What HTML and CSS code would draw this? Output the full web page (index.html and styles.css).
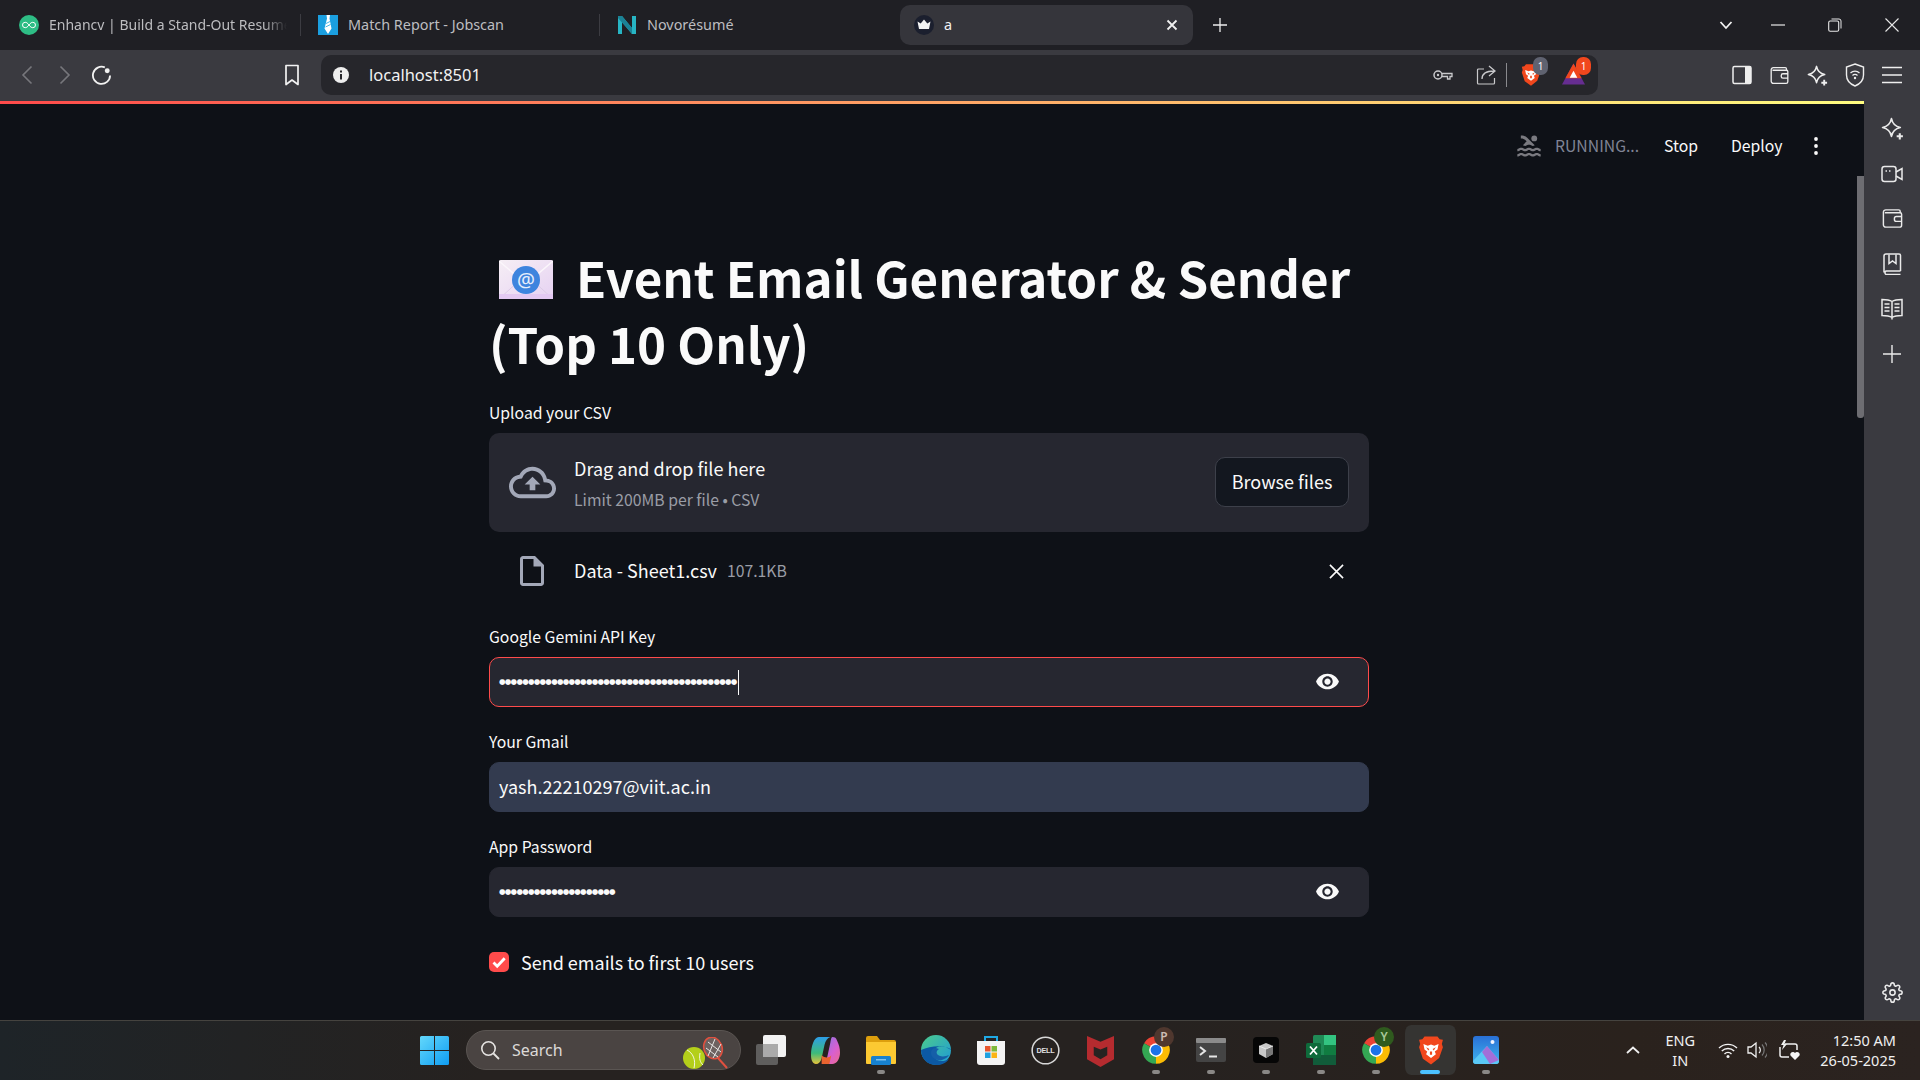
FILE: index.html
```html
<!DOCTYPE html>
<html lang="en">
<head>
<meta charset="utf-8">
<title>a</title>
<link rel="stylesheet" href="styles.css">
</head>
<body>
<svg class="defs" width="0" height="0">
  <defs>
    <symbol id="i-star" viewBox="0 0 24 24"><path d="M11 2.500c1 5 3.500 7.500 8.500 8.500-5 1-7.500 3.500-8.500 8.500C10 14.500 7.500 12 2.500 11 7.500 10 10 7.500 11 2.500z" fill="none" stroke="currentColor" stroke-width="1.600" stroke-linejoin="round"/><path d="M19 16.500v6M16 19.500h6" stroke="currentColor" stroke-width="2"/></symbol>
    <symbol id="i-wallet" viewBox="0 0 24 24"><path d="M20 6V4.500A1.500 1.500 0 0 0 18.500 3H5a2.500 2.500 0 0 0-2.500 2.500v13A2.500 2.500 0 0 0 5 21h14.500a2 2 0 0 0 2-2V7.500A1.500 1.500 0 0 0 20 6H4M21.500 10H16a2 2 0 0 0-2 2v1a2 2 0 0 0 2 2h5.500" fill="none" stroke="currentColor" stroke-width="1.500"/></symbol>
    <symbol id="i-eye" viewBox="0 0 24 24"><path fill="currentColor" d="M12 4.500C7 4.500 2.730 7.610 1 12c1.730 4.390 6 7.500 11 7.500s9.270-3.110 11-7.500c-1.730-4.390-6-7.500-11-7.500zM12 17c-2.760 0-5-2.240-5-5s2.240-5 5-5 5 2.240 5 5-2.240 5-5 5zm0-8c-1.660 0-3 1.340-3 3s1.340 3 3 3 3-1.340 3-3-1.340-3-3-3z"/></symbol>
    <symbol id="i-chrome" viewBox="0 0 24 24"><path fill="#ea4335" d="M12 12 2.470 6.500A11 11 0 0 1 21.530 6.500z"/><path fill="#fbbc04" d="M12 12 21.530 6.500A11 11 0 0 1 12 23z"/><path fill="#34a853" d="M12 12 12 23A11 11 0 0 1 2.470 6.500z"/><circle cx="12" cy="12" r="5.500" fill="#fff"/><circle cx="12" cy="12" r="4.300" fill="#1a73e8"/></symbol>
    <symbol id="i-lion" viewBox="0 0 24 28"><path fill="#f1471d" d="M6 1h12l2 2.500 3 .5-1 4 1 3-3.500 10L12 27l-7.500-5.500L1 11l1-3-1-4 3-.5z"/><path fill="#fff" d="M5 8l4 1.500 3-1 3 1L19 8l-1 5-2.500 2 1 2.500L12 21l-4.500-3.500 1-2.500L6 13z"/><path fill="#f1471d" d="M7.500 11l3 1.500-1 1.500zM16.500 11l-3 1.500 1 1.500zM11 15h2v3h-2z"/></symbol>
  </defs>
</svg>

<header class="tabstrip">
  <div class="tab">
    <svg class="favicon" viewBox="0 0 20 20"><circle cx="10" cy="10" r="10" fill="#2ebd85"/><path d="M10 10c-1.500-2-2.500-2.700-3.800-2.700a2.700 2.700 0 0 0 0 5.400c1.300 0 2.300-.7 3.800-2.700s2.500-2.700 3.800-2.700a2.700 2.700 0 0 1 0 5.400c-1.300 0-2.300-.7-3.800-2.700z" fill="none" stroke="#fff" stroke-width="1"/></svg>
    <span class="tab-title tab-fade">Enhancv | Build a Stand-Out Resume</span>
  </div>
  <div class="tab tab-sep">
    <svg class="favicon" viewBox="0 0 20 20"><rect width="20" height="20" fill="#1b9fe0"/><path d="M8.500 0h3.500l-.5 3.500 2 10L10 19l-3.500-5.500 2.500-10z" fill="#fff"/><path d="M8 8.500l4-2M7.500 12l5-2.500" stroke="#1b9fe0" stroke-width=".8"/></svg>
    <span class="tab-title">Match Report - Jobscan</span>
  </div>
  <div class="tab tab-sep tab-n">
    <svg class="favicon" viewBox="0 0 20 20"><path d="M1 19V1h4l10 12V1h4v18h-4L5 7v12z" fill="#27b5c4"/><path d="M1 1h4l10 12v6L1 3z" fill="#1b8296"/></svg>
    <span class="tab-title">Novorésumé</span>
  </div>
  <div class="tab-active">
    <svg class="favicon" viewBox="0 0 20 20"><circle cx="10" cy="10" r="10" fill="#1b1f2e"/><path d="M3.500 6.500l3.200 2L10 4.500l3.300 4 3.200-2-1.500 7.500H5z" fill="#f2f2f2"/></svg>
    <span class="tab-title tab-title-active">a</span>
    <svg class="tab-close" viewBox="0 0 12 12"><path d="M1.500 1.500l9 9M10.500 1.500l-9 9" stroke="#f0f0f0" stroke-width="1.800"/></svg>
  </div>
  <svg class="tab-new" viewBox="0 0 14 14"><path d="M7 0v14M0 7h14" stroke="#ededed" stroke-width="1.300"/></svg>
  <div class="winctl">
    <div class="winbtn winbtn-list"><svg viewBox="0 0 14 14" width="14" height="14"><path d="M1.500 4l5.500 6 5.500-6" fill="none" stroke="#f2f2f2" stroke-width="1.800"/></svg></div>
    <div class="winbtn"><svg viewBox="0 0 14 14" width="14" height="14"><path d="M0 7h14" stroke="#e8e8e8" stroke-width="1.200"/></svg></div>
    <div class="winbtn"><svg viewBox="0 0 14 14" width="14" height="14"><rect x=".7" y="3" width="10" height="10.300" rx="1.500" fill="none" stroke="#e8e8e8" stroke-width="1.100"/><path d="M3.500 1h7.500a2 2 0 0 1 2 2v7.500" fill="none" stroke="#e8e8e8" stroke-width="1"/></svg></div>
    <div class="winbtn"><svg viewBox="0 0 14 14" width="14" height="14"><path d="M.5.500l13 13M13.500.500l-13 13" stroke="#e8e8e8" stroke-width="1.100"/></svg></div>
  </div>
</header>

<nav class="toolbar">
  <div class="tb-btn"><svg viewBox="0 0 12 20" width="12" height="20"><path d="M10.500 1.500 2 10l8.500 8.500" fill="none" stroke="#77777c" stroke-width="1.600"/></svg></div>
  <div class="tb-btn"><svg viewBox="0 0 12 20" width="12" height="20"><path d="M1.500 1.500 10 10l-8.500 8.500" fill="none" stroke="#77777c" stroke-width="1.600"/></svg></div>
  <div class="tb-btn tb-reload"><svg viewBox="0 0 22 22" width="21" height="21"><path d="M14.500 2.500A9 9 0 1 0 20 11" fill="none" stroke="#f2f2f2" stroke-width="1.900"/><circle cx="17" cy="6" r="2.600" fill="#f2f2f2"/></svg></div>
  <div class="tb-bookmark"><svg viewBox="0 0 16 22" width="16" height="22"><path d="M2 1.500h12v19l-6-4.500-6 4.500z" fill="none" stroke="#f2f2f2" stroke-width="1.700" stroke-linejoin="round"/></svg></div>
  <div class="omnibox">
    <svg class="omni-info" viewBox="0 0 16 16"><circle cx="8" cy="8" r="8" fill="#eee"/><rect x="7" y="7" width="2" height="5.500" fill="#26262b"/><rect x="7" y="3.500" width="2" height="2" fill="#26262b"/></svg>
    <span class="omni-url">localhost:8501</span>
    <div class="omni-right">
      <svg class="om-key" viewBox="0 0 20 12" width="20" height="12"><circle cx="5" cy="6" r="4" fill="none" stroke="#c9c9cc" stroke-width="1.500"/><circle cx="5" cy="6" r="1.200" fill="#c9c9cc"/><path d="M9 4.500h10v3h-2v2.500h-2.500V7.500H9" fill="none" stroke="#c9c9cc" stroke-width="1.300"/></svg>
      <svg class="om-share" viewBox="0 0 20 20" width="20" height="20"><path d="M8 4H2.500a1 1 0 0 0-1 1v13a1 1 0 0 0 1 1h15a1 1 0 0 0 1-1v-5" fill="none" stroke="#c9c9cc" stroke-width="1.200"/><path d="M6 14c0-5.500 4-8 12-8M13 1l6 5-6 5" fill="none" stroke="#c9c9cc" stroke-width="1.300"/></svg>
      <span class="om-sep"></span>
      <div class="om-ext">
        <svg class="om-lion" width="20" height="24"><use href="#i-lion"/></svg>
        <span class="om-badge om-badge-grey">1</span>
      </div>
      <div class="om-ext om-ext-bat">
        <svg class="om-bat" viewBox="0 0 24 22" width="23" height="22"><path d="M12 0 24 22H0z" fill="#662d91"/><path d="M12 0 20.500 15.500h-17z" fill="#f1471d"/><path d="M12 7.500l4 7.500H8z" fill="#fff"/></svg>
        <span class="om-badge om-badge-red">1</span>
      </div>
    </div>
  </div>
  <div class="tb-right">
    <div class="tb-btn2"><svg viewBox="0 0 20 20" width="20" height="20"><rect x="1" y="1.500" width="18" height="17" rx="1.500" fill="none" stroke="#eee" stroke-width="1.500"/><rect x="13" y="1.500" width="6" height="17" fill="#eee"/></svg></div>
    <div class="tb-btn2 icon-light"><svg width="21" height="21"><use href="#i-wallet"/></svg></div>
    <div class="tb-btn2 icon-light"><svg width="23" height="23"><use href="#i-star"/></svg></div>
    <div class="tb-btn2"><svg viewBox="0 0 20 24" width="20" height="24"><path d="M10 1l8.500 3v8c0 5.500-3.500 9-8.500 11-5-2-8.500-5.500-8.500-11V4z" fill="none" stroke="#eee" stroke-width="1.400"/><path d="M5.500 10a6.500 6.500 0 0 1 9 0M7.500 12.500a3.500 3.500 0 0 1 5 0" fill="none" stroke="#eee" stroke-width="1.300"/><circle cx="10" cy="15" r="1.200" fill="#eee"/></svg></div>
    <div class="tb-btn2"><svg viewBox="0 0 20 18" width="20" height="18"><path d="M0 1.500h20M0 9h20M0 16.500h20" stroke="#eee" stroke-width="1.500"/></svg></div>
  </div>
</nav>

<div class="viewport">
  <div class="main">
    <div class="rainbow"></div>
    <div class="main-row">
      <div class="page">
        <div class="st-header">
          <svg class="st-swim" viewBox="0 0 24 24"><path fill="currentColor" d="M22 21c-1.110 0-1.730-.37-2.180-.64-.37-.22-.6-.36-1.150-.36-.56 0-.78.13-1.150.36-.46.27-1.070.64-2.180.64s-1.730-.37-2.180-.64c-.37-.22-.6-.36-1.150-.36-.56 0-.78.13-1.150.36-.46.27-1.080.64-2.190.64-1.110 0-1.730-.37-2.180-.64-.37-.23-.6-.36-1.150-.36s-.78.13-1.150.36c-.46.27-1.080.64-2.190.64v-2c.56 0 .78-.13 1.150-.36.46-.27 1.080-.64 2.190-.64s1.730.37 2.180.64c.37.23.59.36 1.150.36.56 0 .78-.13 1.150-.36.46-.27 1.080-.64 2.190-.64 1.110 0 1.730.37 2.180.64.37.22.6.36 1.150.36s.78-.13 1.150-.36c.45-.27 1.070-.64 2.180-.64s1.730.37 2.180.64c.37.23.59.36 1.150.36v2zm0-4.500c-1.110 0-1.730-.37-2.180-.64-.37-.22-.6-.36-1.150-.36-.56 0-.78.13-1.150.36-.45.27-1.070.64-2.180.64s-1.730-.37-2.180-.64c-.37-.22-.6-.36-1.150-.36-.56 0-.78.13-1.150.36-.45.27-1.070.64-2.180.64s-1.730-.37-2.180-.64c-.37-.22-.6-.36-1.150-.36s-.78.13-1.150.36c-.47.27-1.090.64-2.200.64v-2c.56 0 .78-.13 1.150-.36.45-.27 1.070-.64 2.180-.64s1.730.37 2.180.64c.37.22.6.36 1.150.36.56 0 .78-.13 1.150-.36.45-.27 1.070-.64 2.180-.64s1.730.37 2.180.64c.37.22.6.36 1.150.36s.78-.13 1.150-.36c.45-.27 1.070-.64 2.180-.64s1.730.37 2.180.64c.37.22.6.36 1.150.36v2zM8.670 12c.56 0 .78-.13 1.150-.36.46-.27 1.080-.64 2.190-.64 1.110 0 1.730.37 2.180.64.37.22.6.36 1.150.36s.78-.13 1.150-.36c.12-.07.26-.15.41-.23L10.480 5C8.930 3.450 7.500 2.990 5 3v2.500c1.820-.01 2.890.39 4 1.500l1 1-3.250 3.250c.31.12.56.27.77.39.37.23.59.36 1.150.36z"/><circle fill="currentColor" cx="16.500" cy="5.500" r="2.500"/></svg>
          <span class="st-running">RUNNING...</span>
          <span class="st-action st-stop">Stop</span>
          <span class="st-action st-deploy">Deploy</span>
          <svg class="st-dots" viewBox="0 0 4 18"><circle cx="2" cy="2" r="1.900"/><circle cx="2" cy="9" r="1.900"/><circle cx="2" cy="16" r="1.900"/></svg>
        </div>

        <div class="content">
          <h1 class="title"><svg class="mail-emoji" viewBox="0 0 54 39"><defs><linearGradient id="mg" x1="0" y1="0" x2="1" y2="1"><stop offset="0" stop-color="#f6eef5"/><stop offset="1" stop-color="#e6d2f2"/></linearGradient></defs><rect width="54" height="39" rx="1.500" fill="url(#mg)"/><path d="M0 39 22 19M54 39 32 19" stroke="#dccbe6" stroke-width="1" fill="none"/><path d="M0 1 27 24 54 1" fill="none" stroke="#fbf6fb" stroke-width="1.500"/><path d="M0 34h54v5H0z" fill="#e3c9f2"/><circle cx="27" cy="20" r="14" fill="#3d84de"/><text class="mail-at" x="27" y="26.500" text-anchor="middle">@</text></svg>Event Email Generator &amp; Sender<br>(Top 10 Only)</h1>

          <div class="label label-upload">Upload your CSV</div>
          <div class="dropzone">
            <svg class="cloud" viewBox="0 0 24 24"><path fill="currentColor" d="M19.350 10.040C18.670 6.590 15.640 4 12 4 9.110 4 6.600 5.640 5.350 8.040 2.340 8.360 0 10.910 0 14c0 3.310 2.690 6 6 6h13c2.760 0 5-2.240 5-5 0-2.640-2.050-4.780-4.650-4.960zM19 18H6c-2.210 0-4-1.790-4-4 0-2.050 1.530-3.760 3.560-3.970l1.070-.11.5-.95C8.080 7.140 9.940 6 12 6c2.620 0 4.880 1.860 5.390 4.430l.3 1.500 1.530.11c1.560.1 2.780 1.410 2.780 2.960 0 1.650-1.350 3-3 3zM8 13h2.550v3h2.900v-3H16l-4-4z"/></svg>
            <div class="drop-text">
              <div class="drop-main">Drag and drop file here</div>
              <div class="drop-sub">Limit 200MB per file • CSV</div>
            </div>
            <div class="browse">Browse files</div>
          </div>
          <div class="filerow">
            <svg class="fileicon" viewBox="4 2 16 20"><path fill="currentColor" d="M14 2H6c-1.100 0-1.990.9-1.990 2L4 20c0 1.100.89 2 1.990 2H18c1.100 0 2-.9 2-2V8l-6-6zm4 18H6V4h7v5h5v11z"/></svg>
            <span class="filename">Data - Sheet1.csv</span>
            <span class="filesize">107.1KB</span>
            <svg class="fileclose" viewBox="0 0 16 16"><path d="M1 1l14 14M15 1 1 15" stroke="#fafafa" stroke-width="1.700"/></svg>
          </div>

          <div class="label label-gemini">Google Gemini API Key</div>
          <div class="field field-focus">
            <span class="dots">●●●●●●●●●●●●●●●●●●●●●●●●●●●●●●●●●●●●●●●●●</span><span class="caret"></span>
            <svg class="eye" width="25" height="25"><use href="#i-eye"/></svg>
          </div>

          <div class="label label-next">Your Gmail</div>
          <div class="field field-filled"><span class="field-text">yash.22210297@viit.ac.in</span></div>

          <div class="label label-next">App Password</div>
          <div class="field">
            <span class="dots">●●●●●●●●●●●●●●●●●●●●</span>
            <svg class="eye" width="25" height="25"><use href="#i-eye"/></svg>
          </div>

          <div class="check">
            <span class="checkbox"><svg viewBox="0 0 20 20" width="20" height="20"><path d="M4.500 10.500l3.700 3.700 7.500-8" fill="none" stroke="#fff" stroke-width="2.800"/></svg></span>
            <span class="check-label">Send emails to first 10 users</span>
          </div>
        </div>
      </div>
      <div class="scrolltrack"><div class="scrollthumb"></div></div>
    </div>
  </div>
  <aside class="sidepanel">
    <div class="side-btn"><svg width="25" height="25"><use href="#i-star"/></svg></div>
    <div class="side-btn"><svg viewBox="0 0 22 18" width="22" height="18"><rect x="1" y="1.500" width="14" height="15" rx="2.500" fill="none" stroke="currentColor" stroke-width="1.500"/><path d="M15 7l6-3.500v11L15 11" fill="none" stroke="currentColor" stroke-width="1.500"/><path d="M4.500 6h1.500M8 6h1.500" stroke="currentColor" stroke-width="1.500"/></svg></div>
    <div class="side-btn"><svg width="23" height="23"><use href="#i-wallet"/></svg></div>
    <div class="side-btn"><svg viewBox="0 0 20 22" width="20" height="22"><path d="M18.500 18H4a2 2 0 0 0 0 3.500h14.500M2 19.500V3a2 2 0 0 1 2-2h13a1.500 1.500 0 0 1 1.500 1.500V18" fill="none" stroke="currentColor" stroke-width="1.500"/><path d="M7 1.500v9l3.500-2.500 3.500 2.500v-9" fill="none" stroke="currentColor" stroke-width="1.500"/></svg></div>
    <div class="side-btn"><svg viewBox="0 0 22 22" width="22" height="22"><path d="M11 3.500C8 1.500 4.500 1.500 1 1.500v16c3.500 0 7 0 10 2 3-2 6.500-2 10-2v-16c-3.500 0-7 0-10 2zM11 3.500v18" fill="none" stroke="currentColor" stroke-width="1.500"/><path d="M3.500 6h5M3.500 9.500h5M3.500 13h5M13.500 6h5M13.500 9.500h5M13.500 13h5" stroke="currentColor" stroke-width="1.300"/></svg></div>
    <div class="side-btn"><svg viewBox="0 0 18 18" width="18" height="18"><path d="M9 0v18M0 9h18" stroke="currentColor" stroke-width="1.400"/></svg></div>
    <div class="side-gear"><svg viewBox="0 0 24 24" width="21" height="21"><circle cx="12" cy="12" r="3" fill="none" stroke="currentColor" stroke-width="1.800"/><path fill="none" stroke="currentColor" stroke-width="1.800" d="M19.400 15a1.650 1.650 0 0 0 .33 1.820l.06.06a2 2 0 0 1 0 2.830 2 2 0 0 1-2.830 0l-.06-.06a1.650 1.650 0 0 0-1.820-.33 1.650 1.650 0 0 0-1 1.510V21a2 2 0 0 1-2 2 2 2 0 0 1-2-2v-.09A1.650 1.650 0 0 0 9 19.400a1.650 1.650 0 0 0-1.820.33l-.06.06a2 2 0 0 1-2.830 0 2 2 0 0 1 0-2.830l.06-.06a1.650 1.650 0 0 0 .33-1.820 1.650 1.650 0 0 0-1.510-1H3a2 2 0 0 1-2-2 2 2 0 0 1 2-2h.09A1.650 1.650 0 0 0 4.600 9a1.650 1.650 0 0 0-.33-1.820l-.06-.06a2 2 0 0 1 0-2.830 2 2 0 0 1 2.830 0l.06.06a1.650 1.650 0 0 0 1.820.33H9a1.650 1.650 0 0 0 1-1.510V3a2 2 0 0 1 2-2 2 2 0 0 1 2 2v.09a1.650 1.650 0 0 0 1 1.510 1.650 1.650 0 0 0 1.820-.33l.06-.06a2 2 0 0 1 2.830 0 2 2 0 0 1 0 2.830l-.06.06a1.650 1.650 0 0 0-.33 1.820V9a1.650 1.650 0 0 0 1.510 1H21a2 2 0 0 1 2 2 2 2 0 0 1-2 2h-.09a1.650 1.650 0 0 0-1.510 1z"/></svg></div>
  </aside>
</div>

<footer class="taskbar">
  <svg class="win-logo" viewBox="0 0 29 29"><defs><linearGradient id="wg" x1="0" y1="0" x2="1" y2="1"><stop offset="0" stop-color="#63d8fb"/><stop offset="1" stop-color="#0f9df2"/></linearGradient></defs><path fill="url(#wg)" d="M0 1.500A1.500 1.500 0 0 1 1.500 0H14v14H0zM15 0h12.500A1.500 1.500 0 0 1 29 1.500V14H15zM0 15h14v14H1.500A1.500 1.500 0 0 1 0 27.500zM15 15h14v12.500a1.500 1.500 0 0 1-1.500 1.500H15z"/></svg>
  <div class="searchbox">
    <svg class="search-icon" viewBox="0 0 20 20" width="20" height="20"><circle cx="8.500" cy="8.500" r="6.700" fill="none" stroke="#e6e4e2" stroke-width="1.600"/><path d="M13.500 13.500l5.500 5.500" stroke="#e6e4e2" stroke-width="1.800"/></svg>
    <span class="search-text">Search</span>
    <svg class="tennis" viewBox="0 0 48 32" width="48" height="32"><circle cx="12" cy="21" r="11" fill="#b4cf1a"/><path d="M5 13c6 3 9 10 7 18M21 28c-3-3-4-6-3-12" fill="none" stroke="#f3f6df" stroke-width="1"/><ellipse cx="31" cy="11" rx="9" ry="11" transform="rotate(-22 31 11)" fill="#6d6260" stroke="#e0503f" stroke-width="1.600"/><path d="M26 5l13 10M24 11l12 9M33 2l-7 17M39 7l-8 14" stroke="#e8e6e4" stroke-width="1"/><path d="M36 21l9 10" stroke="#e0503f" stroke-width="2"/></svg>
  </div>
  <div class="tasks">
    <div class="task"><svg viewBox="0 0 30 30" width="30" height="30"><rect x="0" y="9" width="22" height="21" rx="2" fill="#5f5e5d"/><rect x="7" y="0" width="23" height="22" rx="2" fill="#f2f2f2"/><rect x="7" y="9" width="15" height="13" fill="#aaa"/></svg></div>
    <div class="task"><svg viewBox="0 0 30 30" width="29" height="29"><defs><linearGradient id="cp1" x1="0" y1="0" x2="0" y2="1"><stop offset="0" stop-color="#2d9ee8"/><stop offset=".6" stop-color="#3dbb7a"/><stop offset="1" stop-color="#e8c33a"/></linearGradient><linearGradient id="cp2" x1="0" y1="0" x2="1" y2="1"><stop offset="0" stop-color="#7a7ae8"/><stop offset=".6" stop-color="#d85fd0"/><stop offset="1" stop-color="#ee6a8a"/></linearGradient></defs><path fill="url(#cp1)" d="M8 1h12c-3 1-5 4-6 8l-3 14c-1 4-3 6-6 6-3 0-5-4-5-9C0 11 3 1 8 1z"/><path fill="url(#cp2)" d="M22 1c3 0 4 1 5 4 2 4 3 8 3 12 0 6-3 12-8 12H11c3-1 5-4 6-8l3-14c.5-3 1-6 2-6z"/><path fill="#e8632f" d="M11 20c3 3 8 3 10 0l-2 9h-8z"/></svg></div>
    <div class="task task-open"><svg viewBox="0 0 30 30" width="30" height="30"><path d="M0 3a2 2 0 0 1 2-2h9l3 4h14a2 2 0 0 1 2 2v4H0z" fill="#dd9f0d"/><path d="M0 7h30v21a1 1 0 0 1-1 1H1a1 1 0 0 1-1-1z" fill="#fcc932"/><rect x="5" y="21" width="20" height="9" rx="1.500" fill="#1781cf"/><rect x="10" y="24" width="10" height="1.500" fill="#7cc2ef"/></svg></div>
    <div class="task"><svg viewBox="0 0 30 30" width="30" height="30"><defs><linearGradient id="edg" x1="0" y1="0" x2="1" y2="1"><stop offset="0" stop-color="#4ccb8d"/><stop offset="1" stop-color="#1e9ad6"/></linearGradient></defs><circle cx="15" cy="15" r="15" fill="url(#edg)"/><path d="M0 15C0 24 7 30 15 30c6 0 10-2 13-6-5 3-12 3-15-2-2-3-1-7 2-9 4-3 9-2 15 2 0-1-2-2-6-3-7-2-17 0-24 3z" fill="#0c59a4"/><path d="M15 13c-3 0-5 2-5 5 0 5 6 8 11 7 3-1 6-3 7-5-4 2-10 2-12-1-1-2 0-4 2-5z" fill="#155fa8"/></svg></div>
    <div class="task"><svg viewBox="0 0 30 30" width="30" height="30"><path d="M9 6V2h12v4" fill="none" stroke="#1fa9e4" stroke-width="2"/><path d="M1 6h28v21a3 3 0 0 1-3 3H4a3 3 0 0 1-3-3z" fill="#f4f4f4"/><rect x="9" y="11" width="5.500" height="5.500" fill="#e8562d"/><rect x="15.500" y="11" width="5.500" height="5.500" fill="#7db83a"/><rect x="9" y="17.500" width="5.500" height="5.500" fill="#1fa1e0"/><rect x="15.500" y="17.500" width="5.500" height="5.500" fill="#fbb416"/></svg></div>
    <div class="task"><svg viewBox="0 0 30 30" width="29" height="29"><circle cx="15" cy="15" r="13.800" fill="none" stroke="#d8d8d8" stroke-width="1.600"/><text class="dell-text" x="15" y="18" text-anchor="middle">DELL</text></svg></div>
    <div class="task"><svg viewBox="0 0 28 34" width="27" height="33"><path d="M0 2l14 6 14-6v24l-14 8-14-8z" fill="#b52b2f"/><path d="M7 13l7 3 7-3v9l-7 4-7-4z" fill="#272321"/></svg></div>
    <div class="task task-open task-profile"><svg width="30" height="30"><use href="#i-chrome"/></svg><span class="profile profile-p">P</span></div>
    <div class="task task-open"><svg viewBox="0 0 30 24" width="30" height="24"><rect width="30" height="24" rx="2" fill="#444"/><rect width="30" height="5" rx="1" fill="#8b8b8b"/><path d="M4 9l5 4-5 4" fill="none" stroke="#e6e6e6" stroke-width="2"/><path d="M13 18.500h8" stroke="#e6e6e6" stroke-width="2"/></svg></div>
    <div class="task task-open"><svg viewBox="0 0 26 26" width="26" height="26"><rect width="26" height="26" rx="4" fill="#060606"/><path d="M6 9l7-3 7 3v8l-7 4-7-4z" fill="#c9c9c9"/><path d="M13 12l7-3v8l-7 4z" fill="#777"/><path d="M6 9l7 3 7-3" fill="none" stroke="#f2f2f2" stroke-width=".8"/></svg></div>
    <div class="task task-open"><svg viewBox="0 0 30 30" width="30" height="30"><rect x="7" width="23" height="30" rx="1.500" fill="#1f8a56"/><rect x="18" width="12" height="10" fill="#33c481"/><rect x="7" y="20" width="23" height="10" fill="#115c3a"/><rect x="18" y="10" width="12" height="10" fill="#107c41"/><rect y="8" width="15" height="15" rx="1.500" fill="#0e6b3b"/><path d="M4 11.500l7 8M11 11.500l-7 8" stroke="#fff" stroke-width="1.800"/></svg></div>
    <div class="task task-open task-profile"><svg width="30" height="30"><use href="#i-chrome"/></svg><span class="profile profile-y">Y</span></div>
    <div class="task task-active"><svg width="26" height="31"><use href="#i-lion"/></svg></div>
    <div class="task task-open"><svg viewBox="0 0 26 28" width="26" height="28"><defs><linearGradient id="ph" x1="0" y1="0" x2="0" y2="1"><stop offset="0" stop-color="#2970d6"/><stop offset="1" stop-color="#3fb4ee"/></linearGradient></defs><rect width="26" height="28" rx="3" fill="url(#ph)"/><circle cx="19.500" cy="6" r="2" fill="#f0f4ff"/><path d="M0 25 14 10l12 14v1a3 3 0 0 1-3 3H3a3 3 0 0 1-3-3z" fill="#5ac8f5"/><path d="M14 10l12 14-9 4-8-12z" fill="#a36fd8"/></svg></div>
  </div>
  <div class="tray">
    <svg class="tray-chev" viewBox="0 0 14 8" width="14" height="8"><path d="M1 7l6-5.500L13 7" fill="none" stroke="#f0f0f0" stroke-width="1.800"/></svg>
    <div class="tray-lang"><span>ENG</span><span>IN</span></div>
    <svg class="tray-wifi" viewBox="0 0 20 16" width="20" height="16"><path d="M1 6a13 13 0 0 1 18 0M3.800 9a9 9 0 0 1 12.400 0M6.500 12a5 5 0 0 1 7 0" fill="none" stroke="#f2f2f2" stroke-width="1.400"/><circle cx="10" cy="14.500" r="1.500" fill="#f2f2f2"/></svg>
    <svg class="tray-vol" viewBox="0 0 20 18" width="20" height="18"><path d="M1 6h3l5-4v14l-5-4H1z" fill="none" stroke="#f0f0f0" stroke-width="1.300"/><path d="M12 6a4 4 0 0 1 0 6" fill="none" stroke="#f0f0f0" stroke-width="1.200"/><path d="M15 3.500a8 8 0 0 1 0 11M18 1.500a11 11 0 0 1 0 15" fill="none" stroke="#777" stroke-width="1.200"/></svg>
    <svg class="tray-bat" viewBox="0 0 22 20" width="22" height="20"><path d="M7 4h10a2 2 0 0 1 2 2v4M2 7v8a2 2 0 0 0 2 2h7" fill="none" stroke="#f0f0f0" stroke-width="1.500"/><path d="M6 0 3 5h2.500L4 10l5-6H6.500L8 0z" fill="#f0f0f0"/><path d="M17 20l-4.500-4.500a2.600 2.600 0 0 1 4.500-2.500 2.600 2.600 0 0 1 4.500 2.500z" fill="#f5f5f5"/></svg>
    <div class="clock"><span>12:50 AM</span><span>26-05-2025</span></div>
  </div>
</footer>
</body>
</html>
```
FILE: styles.css
```css
* { box-sizing: border-box; }
html, body { margin: 0; height: 100%; }
body {
  width: 1920px;
  height: 1080px;
  overflow: hidden;
  display: flex;
  flex-direction: column;
  background: #0e1117;
  font-family: "Noto Sans", "Open Sans", sans-serif;
}
.defs { position: absolute; }

/* tab strip */
.tabstrip {
  height: 50px;
  flex: none;
  display: flex;
  align-items: center;
  background: #1f1f24;
  padding-left: 2px;
  color: #bdbdc0;
  font-size: 14.400px;
}
.tab {
  width: 298px;
  height: 22px;
  padding-left: 17px;
  display: flex;
  align-items: center;
  gap: 10px;
}
.tab-sep { width: 299px; border-left: 1px solid #3c3c42; padding-left: 17px; }
.tab-n { width: 301px; }
.favicon { width: 20px; height: 20px; flex: none; }
.tab-title { white-space: nowrap; overflow: hidden; line-height: 22px; }
.tab-fade {
  width: 238px;
  font-size: 14px;
  -webkit-mask-image: linear-gradient(90deg, #000 90%, transparent 100%);
  mask-image: linear-gradient(90deg, #000 90%, transparent 100%);
}
.tab-active {
  width: 293px;
  height: 40px;
  background: #35353b;
  border-radius: 10px;
  display: flex;
  align-items: center;
  gap: 10px;
  padding: 0 15px 0 14px;
}
.tab-title-active { color: #f2f2f2; flex: 1; }
.tab-close { width: 12px; height: 12px; }
.tab-new { width: 14px; height: 14px; margin-left: 20px; }
.winctl { margin-left: auto; display: flex; align-items: center; }
.winbtn { width: 57px; display: flex; justify-content: center; }
.winbtn-list { width: 46px; }

/* toolbar */
.toolbar {
  height: 51px;
  flex: none;
  display: flex;
  align-items: center;
  background: #3a3a40;
  padding: 0 9px 1px 8px;
}
.tb-btn { width: 38px; height: 40px; display: flex; align-items: center; justify-content: center; }
.tb-reload { margin: 0 2px 0 -2px; }
.tb-bookmark { width: 16px; margin-left: 162px; display: flex; }
.omnibox {
  width: 1277px;
  height: 40px;
  margin-left: 21px;
  background: #26262b;
  border-radius: 10px;
  display: flex;
  align-items: center;
  padding-left: 12px;
  color: #f2f2f2;
}
.omni-info { width: 16px; height: 16px; flex: none; }
.omni-url { margin-left: 20px; font-size: 16.500px; line-height: 24px; }
.omni-right { margin-left: auto; display: flex; align-items: center; }
.om-key { margin-right: 23px; }
.om-share { margin-right: 10px; }
.om-sep { width: 1px; height: 24px; background: #8a8a8e; margin-right: 14px; }
.om-ext { position: relative; width: 24px; height: 24px; display: flex; }
.om-ext-bat { margin-left: 17px; margin-right: 12px; }
.om-badge {
  position: absolute;
  top: -6px;
  left: 12px;
  width: 15px;
  height: 18px;
  border-radius: 7px;
  color: #fff;
  font-size: 10px;
  line-height: 18px;
  text-align: center;
}
.om-badge-grey { background: #5f6270; }
.om-badge-red { background: #f1471d; left: 14px; }
.tb-right { margin-left: auto; display: flex; }
.tb-btn2 { width: 37.500px; height: 40px; display: flex; align-items: center; justify-content: center; }
.icon-light { color: #eee; }

/* viewport */
.viewport { flex: 1; min-height: 0; display: flex; }
.main { flex: 1; min-width: 0; display: flex; flex-direction: column; }
.rainbow { height: 3px; flex: none; background: linear-gradient(90deg, #ff4b4b, #fffd80); }
.main-row { flex: 1; min-height: 0; display: flex; }
.page {
  flex: 1;
  min-width: 0;
  overflow: hidden;
  background: #0e1117;
  color: #fafafa;
  font-family: "Noto Sans CJK JP", "Noto Sans", sans-serif;
}
.scrolltrack { width: 7px; flex: none; padding-top: 72px; background: #0e1117; }
.scrollthumb { height: 242px; background: #6d6d72; border-radius: 0 0 3px 3px; }
.sidepanel {
  width: 56px;
  flex: none;
  background: #3a3a40;
  color: #eaeaea;
  display: flex;
  flex-direction: column;
  align-items: center;
  padding: 5px 0 16px;
}
.side-btn { width: 40px; height: 45px; display: flex; align-items: center; justify-content: center; }
.side-gear { margin-top: auto; width: 40px; height: 24px; display: flex; align-items: center; justify-content: center; }

/* streamlit header */
.st-header {
  height: 83px;
  display: flex;
  align-items: center;
  padding-left: 1516px;
  font-size: 15.750px;
  line-height: 24px;
}
.st-swim { width: 28px; height: 28px; color: #7a7a80; flex: none; margin-left: -1px; }
.st-running { margin-left: 12px; color: #808495; width: 109px; white-space: nowrap; }
.st-action { color: #fafafa; }
.st-stop { width: 67px; }
.st-deploy { width: 83px; }
.st-dots { width: 4px; height: 18px; fill: #fafafa; flex: none; }

/* content */
.content { margin-left: 489px; width: 880px; }
.title {
  margin: 57px 0 0;
  font-size: 49.250px;
  font-weight: 700;
  line-height: 66px;
  color: #fafafa;
}
.mail-emoji { width: 54px; height: 39px; margin: 0 23px 0 10px; vertical-align: -1px; }
.mail-at { font: 400 20px "Noto Sans", sans-serif; fill: #e6eefc; }
.label { font-size: 15.750px; line-height: 24px; color: #fafafa; }
.label-upload { margin-top: 25px; height: 32px; }
.label-gemini { height: 32px; }
.label-next { margin-top: 23px; height: 32px; }
.dropzone {
  height: 99px;
  border-radius: 10px;
  background: #262730;
  display: flex;
  align-items: center;
  padding: 0 20px;
}
.cloud { width: 47px; height: 47px; color: #a3a8b8; flex: none; }
.drop-text { margin-left: 18px; flex: 1; }
.drop-main { font-size: 18px; line-height: 30px; }
.drop-sub { font-size: 15.750px; line-height: 24px; margin-top: 5px; color: #9a9da6; }
.browse {
  width: 134px;
  height: 50px;
  margin-bottom: 2px;
  border: 1px solid #3d404a;
  border-radius: 10px;
  background: #13171f;
  font-size: 18px;
  line-height: 46px;
  text-align: center;
}
.filerow {
  height: 78px;
  display: flex;
  align-items: center;
  padding-left: 31px;
  margin-bottom: 15px;
}
.fileicon { width: 24px; height: 30px; color: #a3a8b8; flex: none; margin-right: 30px; }
.filename { font-size: 18px; line-height: 30px; margin-bottom: 2px; }
.filesize { font-size: 15.750px; line-height: 24px; color: #9a9da6; margin-left: 10px; }
.fileclose { width: 15px; height: 15px; margin-left: auto; margin-right: 25px; }
.field {
  height: 50px;
  border-radius: 10px;
  background: #262730;
  border: 1px solid #262730;
  display: flex;
  align-items: center;
  padding: 0 9px;
  font-size: 18px;
  color: #fafafa;
}
.field-focus { border-color: #ff4b4b; }
.field-filled { background: #333b4f; border-color: #333b4f; }
.field-text { margin-bottom: 2px; }
.dots { font-family: "DejaVu Sans", sans-serif; font-size: 7.500px; letter-spacing: -.75px; line-height: 30px; white-space: nowrap; }
.caret { width: 1px; height: 25px; background: #fafafa; margin-left: 1px; }
.eye { margin-left: auto; margin-right: 19px; margin-bottom: 1px; color: #fafafa; }
.check { margin-top: 35px; display: flex; align-items: center; height: 20px; }
.checkbox { width: 20px; height: 20px; background: #ff4b4b; border-radius: 5px; display: flex; flex: none; }
.check-label { margin-left: 12px; font-size: 18px; line-height: 30px; margin-bottom: 1px; }

/* taskbar */
.taskbar {
  height: 60px;
  flex: none;
  border-top: 1px solid #45433f;
  background: linear-gradient(90deg, #1e2428 0%, #262220 25%, #262220 60%, #2a221d 85%, #2b2320 100%);
  display: flex;
  align-items: center;
  padding-bottom: 1px;
  color: #f0f0f0;
  font-family: "Noto Sans", sans-serif;
}
.win-logo { width: 29px; height: 29px; margin-left: 420px; flex: none; }
.searchbox {
  width: 275px;
  height: 40px;
  margin-left: 17px;
  border-radius: 20px;
  background: #4a4442;
  border: 1px solid #5a5552;
  display: flex;
  align-items: center;
  padding-left: 13px;
  flex: none;
  position: relative;
}
.search-text { margin-left: 12px; font-size: 16px; color: #dcdad8; }
.tennis { position: absolute; left: 215px; top: 6px; }
.tasks { display: flex; margin-left: 2px; }
.task {
  width: 55px;
  height: 50px;
  display: flex;
  align-items: center;
  justify-content: center;
  position: relative;
  border-radius: 6px;
}
.task-open::after {
  content: "";
  position: absolute;
  left: 24px;
  bottom: 1px;
  width: 8px;
  height: 4px;
  border-radius: 2px;
  background: #8a8886;
}
.task-active {
  background: #353432;
  background-clip: padding-box;
  border-left: 2.500px solid transparent;
  border-right: 2.500px solid transparent;
  border-radius: 8px;
}
.task-active::after {
  content: "";
  position: absolute;
  left: 15px;
  bottom: 1px;
  width: 20px;
  height: 4px;
  border-radius: 2px;
  background: #4cc2ff;
}
.profile {
  position: absolute;
  left: 26px;
  top: 2px;
  width: 20px;
  height: 20px;
  border-radius: 50%;
  font-size: 12px;
  font-weight: 600;
  line-height: 20px;
  text-align: center;
}
.profile-p { background: #4f372e; color: #cdbcb4; }
.profile-y { background: #2f5a1e; color: #a9c89a; }
.dell-text { font: 700 7.500px "Liberation Sans", sans-serif; fill: #e0e0e0; letter-spacing: -.3px; }
.tray { margin-left: auto; display: flex; align-items: center; padding-right: 24px; }
.tray-chev { margin-right: 24px; }
.tray-lang, .clock { display: flex; flex-direction: column; font-size: 14.500px; line-height: 20px; }
.tray-lang { align-items: center; width: 32px; margin-right: 22px; }
.tray-wifi { margin-right: 9px; }
.tray-vol { margin-right: 11px; }
.tray-bat { margin-right: 20px; }
.clock { align-items: flex-end; }
```
